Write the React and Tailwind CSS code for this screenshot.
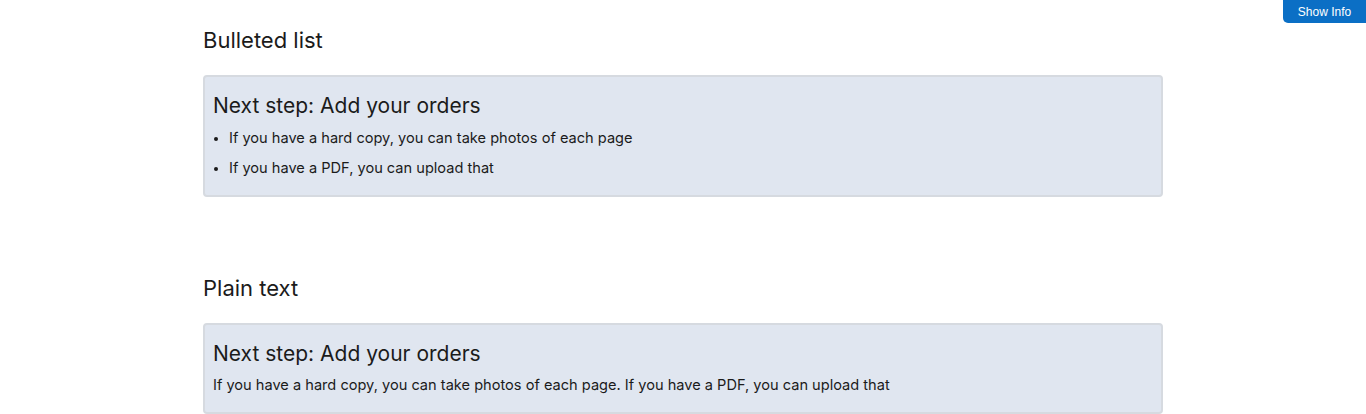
export default function App() {
  const sans = { fontFamily: '"Inter", "Noto Sans", sans-serif' };
  return (
    <div className="relative min-h-[414px] bg-white text-[#1b1b1b]" style={sans}>
      <button
        className="absolute right-0 top-0 h-[23px] w-[83px] rounded-bl-[5px] bg-[#0b6fc5] text-[12px] text-white"
        style={{ fontFamily: '"Liberation Sans", Arial, sans-serif' }}
      >
        Show Info
      </button>

      <div className="mx-auto w-[960px] pt-[24px]">
        <h2 className="text-[22px] leading-[32px]">Bulleted list</h2>
        <div className="mt-[19px] rounded-[4px] border-2 border-[#d6dae0] bg-[#e0e6f0] px-[8px] pb-[12px] pt-[15px]">
          <h3 className="text-[21px] leading-[28px]">Next step: Add your orders</h3>
          <ul className="mt-[3px] list-disc pl-[16px] text-[14.6px] leading-[30px] marker:text-[12px]">
            <li>If you have a hard copy, you can take photos of each page</li>
            <li>If you have a PDF, you can upload that</li>
          </ul>
        </div>

        <h2 className="mt-[75px] text-[22px] leading-[32px]">Plain text</h2>
        <div className="mt-[19px] rounded-[4px] border-2 border-[#d6dae0] bg-[#e0e6f0] px-[8px] pb-[12px] pt-[15px]">
          <h3 className="text-[21px] leading-[28px]">Next step: Add your orders</h3>
          <p className="mt-[2px] text-[14.6px] leading-[30px]">
            If you have a hard copy, you can take photos of each page. If you have a PDF, you can upload that
          </p>
        </div>
      </div>
    </div>
  );
}
